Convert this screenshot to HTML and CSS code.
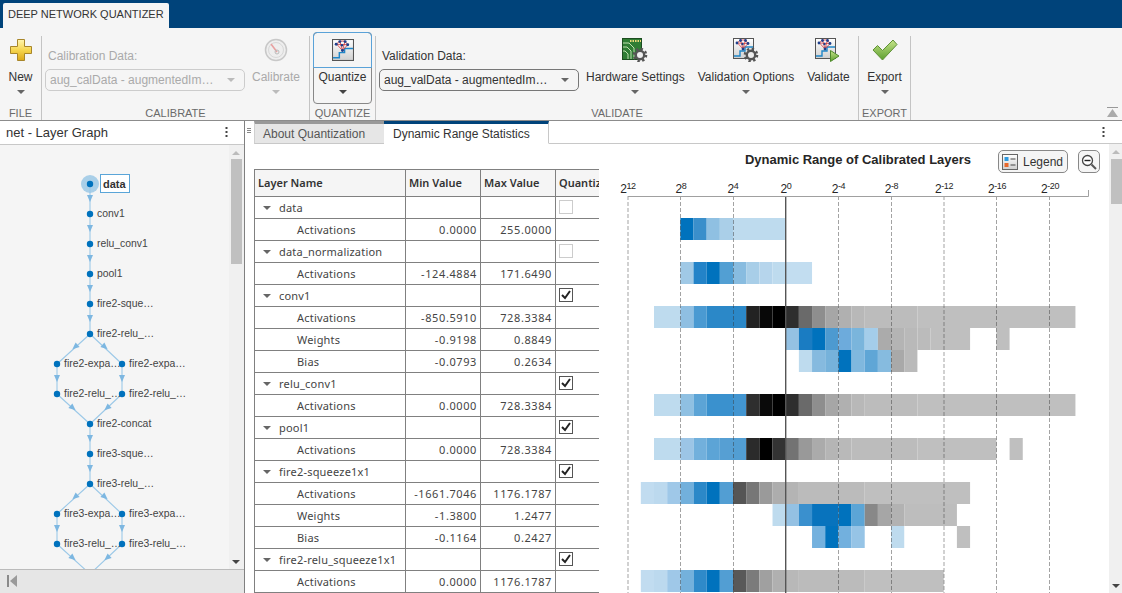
FILE: index.html
```html
<!DOCTYPE html>
<html lang="en">
<head>
<meta charset="utf-8">
<title>Deep Network Quantizer</title>
<link rel="stylesheet" href="styles.css">
</head>
<body>
<svg class="defs" width="0" height="0">
  <defs>
    <linearGradient id="gold" x1="0" y1="0" x2="0" y2="1"><stop offset="0" stop-color="#fff6b0"/><stop offset=".5" stop-color="#f6d650"/><stop offset="1" stop-color="#dca818"/></linearGradient>
    <linearGradient id="green" x1="0" y1="0" x2="0" y2="1"><stop offset="0" stop-color="#c6e48a"/><stop offset="1" stop-color="#5c9e2e"/></linearGradient>
    <linearGradient id="paper" x1="0" y1="0" x2="0" y2="1"><stop offset="0" stop-color="#fff"/><stop offset="1" stop-color="#d0d0d0"/></linearGradient>
    <g id="net">
      <rect x=".5" y=".5" width="20" height="20" fill="url(#paper)" stroke="#555"/>
      <path d="M1 18h6v-5h5V9h8" fill="none" stroke="#1f86c8" stroke-width="1.4"/>
      <path d="M4 5 7.500 2 12.500 2 15 5.500 10 11 5 5.500Z M4 5 15 5.500 M7.500 2 10 11 M12.500 2 10 11" fill="none" stroke="#d8383a" stroke-width=".8"/>
      <g fill="#1e3f8c"><circle cx="4" cy="5" r="1.400"/><circle cx="7.500" cy="2.500" r="1.400"/><circle cx="12.500" cy="2.500" r="1.400"/><circle cx="15" cy="5.500" r="1.400"/><circle cx="10" cy="11" r="1.400"/><circle cx="9.500" cy="6" r="1.200"/></g>
    </g>
    <g id="gear">
      <circle r="6" fill="none" stroke="#555" stroke-width="2.600" stroke-dasharray="2.300 2.400"/>
      <circle r="4.200" fill="#eee" stroke="#555" stroke-width="2.400"/>
    </g>
    <polygon id="arr" points="-3,-3.500 3,-3.500 0,3.500" fill="#7db7e1"/>
    <polygon id="caret" points="0,0 8,0 4,4"/>
  </defs>
</svg>

<header class="titlebar"><div class="apptab">DEEP NETWORK QUANTIZER</div></header>

<section class="ribbon">
  <div class="group g-file">
    <div class="group-body">
      <button class="tool">
        <svg class="icon" width="24" height="24" viewBox="0 0 24 24"><path d="M8.500 1.500h7v7h7v7h-7v7h-7v-7h-7v-7h7z" fill="url(#gold)" stroke="#a8862a" stroke-linejoin="round"/></svg>
        <span>New</span><i class="drop"></i>
      </button>
    </div>
    <div class="group-label">FILE</div>
  </div>
  <div class="sep"></div>
  <div class="group g-cal">
    <div class="group-body">
      <div class="field off">
        <label>Calibration Data:</label>
        <div class="combo"><span>aug_calData - augmentedIm…</span><i class="drop"></i></div>
      </div>
      <button class="tool off">
        <svg class="icon" width="24" height="24" viewBox="0 0 24 24"><circle cx="12" cy="12" r="10.500" fill="#eee" stroke="#c8c8c8" stroke-width="1.500"/><circle cx="12" cy="12" r="7.500" fill="none" stroke="#d8d8d8"/><path d="M7 6l6 8" stroke="#e8a0a0" stroke-width="1.600"/><circle cx="13" cy="14" r="2" fill="none" stroke="#bbb"/></svg>
        <span>Calibrate</span><i class="drop"></i>
      </button>
    </div>
    <div class="group-label">CALIBRATE</div>
  </div>
  <div class="sep"></div>
  <div class="group g-quant">
    <div class="group-body">
      <button class="quantize">
        <span class="q-top"><svg width="22" height="22" viewBox="0 0 21 21"><use href="#net"/></svg></span>
        <span class="q-bottom"><span>Quantize</span><i class="drop dark"></i></span>
      </button>
    </div>
    <div class="group-label">QUANTIZE</div>
  </div>
  <div class="sep"></div>
  <div class="group g-val">
    <div class="group-body">
      <div class="field">
        <label>Validation Data:</label>
        <div class="combo"><span>aug_valData - augmentedIm…</span><i class="drop"></i></div>
      </div>
      <button class="tool">
        <svg class="icon" width="26" height="24" viewBox="0 0 26 24"><rect x=".5" y=".5" width="19" height="21" fill="#2f7d34" stroke="#1d4d20"/><path d="M1 5h6l5 5v11M1 9h4l4 4v8M1 13h2l3 3v5" fill="none" stroke="#bfe0b0"/><path d="M8 3h11" stroke="#e8d878" stroke-width="2" stroke-dasharray="1.500 1"/><use href="#gear" x="18" y="17"/></svg>
        <span>Hardware Settings</span><i class="drop"></i>
      </button>
      <button class="tool">
        <svg class="icon" width="26" height="24" viewBox="0 0 26 24"><use href="#net"/><use href="#gear" x="18" y="17"/></svg>
        <span>Validation Options</span><i class="drop"></i>
      </button>
      <button class="tool">
        <svg class="icon" width="26" height="24" viewBox="0 0 26 24"><use href="#net"/><path d="M15.500 12.500 24 18l-8.500 5.500z" fill="url(#green)" stroke="#4d8a2a"/></svg>
        <span>Validate</span>
      </button>
    </div>
    <div class="group-label">VALIDATE</div>
  </div>
  <div class="sep"></div>
  <div class="group g-exp">
    <div class="group-body">
      <button class="tool">
        <svg class="icon" width="26" height="24" viewBox="0 0 26 24"><path d="M1 12l4.500-4.500 5 5L21 2l4 4.500L10.500 22z" fill="url(#green)" stroke="#5f9136" stroke-linejoin="round"/></svg>
        <span>Export</span><i class="drop"></i>
      </button>
    </div>
    <div class="group-label">EXPORT</div>
  </div>
  <div class="sep"></div>
  <div class="ribbon-fill">
    <svg width="11" height="10" viewBox="0 0 11 10"><path d="M0 .5h11" stroke="#999"/><path d="M5.500 2 11 10H0z" fill="#aaa"/></svg>
  </div>
</section>

<main class="workspace">
  <aside class="left">
    <div class="panel-head">
      <h2>net - Layer Graph</h2>
      <svg class="kebab" width="3" height="11" viewBox="0 0 3 11"><g fill="#444"><rect x=".5" width="2" height="2"/><rect x=".5" y="4" width="2" height="2"/><rect x=".5" y="8" width="2" height="2"/></g></svg>
    </div>
    <div class="graph-area">
      <svg class="graph" width="229" height="424" viewBox="0 145 229 424">
        <circle cx="90" cy="184" r="9" fill="#a9cfe8"/>
        <g class="edges">
          <path d="M90 184V334M90 334 57 364M90 334l32 30M57 364v30M122 364v30M57 394l33 30M122 394l-32 30M90 424v60M90 484 57 514M90 484l32 30M57 514v30M122 514v30M57 544l33 30M122 544l-32 30"/>
        </g>
        <use href="#arr" x="90" y="198.500"/><use href="#arr" x="90" y="228.500"/><use href="#arr" x="90" y="258.500"/><use href="#arr" x="90" y="288.500"/><use href="#arr" x="90" y="318.500"/>
        <use href="#arr" transform="translate(75 347) rotate(48)"/><use href="#arr" transform="translate(105 347) rotate(-48)"/>
        <use href="#arr" x="57" y="378.500"/><use href="#arr" x="122" y="378.500"/>
        <use href="#arr" transform="translate(73 408) rotate(-48)"/><use href="#arr" transform="translate(107 408) rotate(48)"/>
        <use href="#arr" x="90" y="438.500"/><use href="#arr" x="90" y="468.500"/>
        <use href="#arr" transform="translate(75 497) rotate(48)"/><use href="#arr" transform="translate(105 497) rotate(-48)"/>
        <use href="#arr" x="57" y="528.500"/><use href="#arr" x="122" y="528.500"/>
        <use href="#arr" transform="translate(73 558) rotate(-48)"/><use href="#arr" transform="translate(107 558) rotate(48)"/>
        <g fill="#0072bd">
          <circle cx="90" cy="184" r="3.200"/><circle cx="90" cy="214" r="3.200"/><circle cx="90" cy="244" r="3.200"/><circle cx="90" cy="274" r="3.200"/><circle cx="90" cy="304" r="3.200"/><circle cx="90" cy="334" r="3.200"/>
          <circle cx="57" cy="364" r="3.200"/><circle cx="122" cy="364" r="3.200"/><circle cx="57" cy="394" r="3.200"/><circle cx="122" cy="394" r="3.200"/>
          <circle cx="90" cy="424" r="3.200"/><circle cx="90" cy="454" r="3.200"/><circle cx="90" cy="484" r="3.200"/>
          <circle cx="57" cy="514" r="3.200"/><circle cx="122" cy="514" r="3.200"/><circle cx="57" cy="544" r="3.200"/><circle cx="122" cy="544" r="3.200"/>
        </g>
        <rect x="100.500" y="174.500" width="29" height="18" fill="#fff" stroke="#5aa5d8"/>
        <text class="node sel" x="103" y="188">data</text>
        <g class="nodes">
          <text class="node" x="97" y="216.500">conv1</text>
          <text class="node" x="97" y="246.500">relu_conv1</text>
          <text class="node" x="97" y="276.500">pool1</text>
          <text class="node" x="97" y="306.500">fire2-sque…</text>
          <text class="node" x="97" y="336.500">fire2-relu_…</text>
          <text class="node" x="64" y="366.500">fire2-expa…</text>
          <text class="node" x="129" y="366.500">fire2-expa…</text>
          <text class="node" x="64" y="396.500">fire2-relu_…</text>
          <text class="node" x="129" y="396.500">fire2-relu_…</text>
          <text class="node" x="97" y="426.500">fire2-concat</text>
          <text class="node" x="97" y="456.500">fire3-sque…</text>
          <text class="node" x="97" y="486.500">fire3-relu_…</text>
          <text class="node" x="64" y="516.500">fire3-expa…</text>
          <text class="node" x="129" y="516.500">fire3-expa…</text>
          <text class="node" x="64" y="546.500">fire3-relu_…</text>
          <text class="node" x="129" y="546.500">fire3-relu_…</text>
        </g>
      </svg>
      <div class="vscroll vscroll-left">
        <i class="up"></i>
        <div class="thumb thumb-left"></div>
        <i class="down"></i>
      </div>
    </div>
    <div class="panel-foot">
      <svg width="10" height="12" viewBox="0 0 10 12"><rect width="2" height="12" fill="#8a8a8a"/><path d="M10 0v12L3 6z" fill="#9a9a9a"/></svg>
    </div>
  </aside>

  <section class="right">
    <div class="tabstrip">
      <div class="grip"><b></b><b></b><b></b></div>
      <div class="tab">About Quantization</div>
      <div class="tab active">Dynamic Range Statistics</div>
      <div class="strip-fill">
        <svg class="kebab" width="3" height="11" viewBox="0 0 3 11"><g fill="#444"><rect x=".5" width="2" height="2"/><rect x=".5" y="4" width="2" height="2"/><rect x=".5" y="8" width="2" height="2"/></g></svg>
      </div>
    </div>
    <div class="content">
      <div class="table-wrap">
        <table class="stats">
          <colgroup><col class="c-name"><col class="c-num"><col class="c-num"><col class="c-q"></colgroup>
          <thead><tr><th>Layer Name</th><th>Min Value</th><th>Max Value</th><th>Quantize</th></tr></thead>
          <tbody>
            <tr><td class="layer"><svg class="tw" width="8" height="4"><use href="#caret"/></svg>data</td><td></td><td></td><td class="q"><span class="cb off"></span></td></tr>
            <tr><td class="sub">Activations</td><td class="n">0.0000</td><td class="n">255.0000</td><td></td></tr>
            <tr><td class="layer"><svg class="tw" width="8" height="4"><use href="#caret"/></svg>data_normalization</td><td></td><td></td><td class="q"><span class="cb off"></span></td></tr>
            <tr><td class="sub">Activations</td><td class="n">-124.4884</td><td class="n">171.6490</td><td></td></tr>
            <tr><td class="layer"><svg class="tw" width="8" height="4"><use href="#caret"/></svg>conv1</td><td></td><td></td><td class="q"><span class="cb on"><svg width="12" height="12" viewBox="0 0 12 12"><path d="M2 6l3 3 5-7" fill="none" stroke="#222" stroke-width="2"/></svg></span></td></tr>
            <tr><td class="sub">Activations</td><td class="n">-850.5910</td><td class="n">728.3384</td><td></td></tr>
            <tr><td class="sub">Weights</td><td class="n">-0.9198</td><td class="n">0.8849</td><td></td></tr>
            <tr><td class="sub">Bias</td><td class="n">-0.0793</td><td class="n">0.2634</td><td></td></tr>
            <tr><td class="layer"><svg class="tw" width="8" height="4"><use href="#caret"/></svg>relu_conv1</td><td></td><td></td><td class="q"><span class="cb on"><svg width="12" height="12" viewBox="0 0 12 12"><path d="M2 6l3 3 5-7" fill="none" stroke="#222" stroke-width="2"/></svg></span></td></tr>
            <tr><td class="sub">Activations</td><td class="n">0.0000</td><td class="n">728.3384</td><td></td></tr>
            <tr><td class="layer"><svg class="tw" width="8" height="4"><use href="#caret"/></svg>pool1</td><td></td><td></td><td class="q"><span class="cb on"><svg width="12" height="12" viewBox="0 0 12 12"><path d="M2 6l3 3 5-7" fill="none" stroke="#222" stroke-width="2"/></svg></span></td></tr>
            <tr><td class="sub">Activations</td><td class="n">0.0000</td><td class="n">728.3384</td><td></td></tr>
            <tr><td class="layer"><svg class="tw" width="8" height="4"><use href="#caret"/></svg>fire2-squeeze1x1</td><td></td><td></td><td class="q"><span class="cb on"><svg width="12" height="12" viewBox="0 0 12 12"><path d="M2 6l3 3 5-7" fill="none" stroke="#222" stroke-width="2"/></svg></span></td></tr>
            <tr><td class="sub">Activations</td><td class="n">-1661.7046</td><td class="n">1176.1787</td><td></td></tr>
            <tr><td class="sub">Weights</td><td class="n">-1.3800</td><td class="n">1.2477</td><td></td></tr>
            <tr><td class="sub">Bias</td><td class="n">-0.1164</td><td class="n">0.2427</td><td></td></tr>
            <tr><td class="layer"><svg class="tw" width="8" height="4"><use href="#caret"/></svg>fire2-relu_squeeze1x1</td><td></td><td></td><td class="q"><span class="cb on"><svg width="12" height="12" viewBox="0 0 12 12"><path d="M2 6l3 3 5-7" fill="none" stroke="#222" stroke-width="2"/></svg></span></td></tr>
            <tr><td class="sub">Activations</td><td class="n">0.0000</td><td class="n">1176.1787</td><td></td></tr>
          </tbody>
        </table>
      </div>
      <div class="chart">
        <svg class="plot" width="510" height="449" viewBox="599 144 510 449">
          <text class="title" x="858" y="164">Dynamic Range of Calibrated Layers</text>
          <g class="heat" transform="translate(785.7 218) scale(13.17 22)">
            <rect x="-8" width="1" fill="#0072bd"/><rect x="-7" width="1" fill="#3a8fcb"/><rect x="-6" width="1" fill="#8fc0e2"/><rect x="-5" width="1" fill="#aacfe8"/><rect x="-4" width="4" fill="#bedbee"/>
          </g>
          <g class="heat" transform="translate(785.7 262) scale(13.17 22)">
            <rect x="-8" width="1" fill="#a0c9e6"/><rect x="-7" width="1" fill="#2383c8"/><rect x="-6" width="1" fill="#0072bd"/><rect x="-5" width="1" fill="#529fd3"/><rect x="-4" width="1" fill="#88bce0"/><rect x="-3" width="1" fill="#a8cee8"/><rect x="-2" width="1" fill="#b6d5ec"/><rect x="-1" width="1" fill="#bedbee"/><rect x="0" width="2" fill="#c2ddf0"/>
          </g>
          <g class="heat" transform="translate(785.7 306) scale(13.17 22)">
            <rect x="-10" width="2" fill="#bedbee"/><rect x="-8" width="1" fill="#8fbfe2"/><rect x="-7" width="1" fill="#4a9ad2"/><rect x="-6" width="3" fill="#2b88c8"/><rect x="-3" width="1" fill="#222"/><rect x="-2" width="1" fill="#080808"/><rect x="-1" width="1" fill="#000"/><rect x="0" width="1" fill="#2e2e2e"/><rect x="1" width="1" fill="#6a6a6a"/><rect x="2" width="1" fill="#8e8e8e"/><rect x="3" width="1" fill="#a6a6a6"/><rect x="4" width="1" fill="#b0b0b0"/><rect x="5" width="1" fill="#b8b8b8"/><rect x="6" width="4" fill="#bcbcbc"/><rect x="10" width="12" fill="#bfbfbf"/>
          </g>
          <g class="heat" transform="translate(785.7 328) scale(13.17 22)">
            <rect x="0" width="1" fill="#94c1e3"/><rect x="1" width="1" fill="#1a7cc2"/><rect x="2" width="1" fill="#0072bd"/><rect x="3" width="1" fill="#4d9ad0"/><rect x="4" width="1" fill="#6dabdc"/><rect x="5" width="1" fill="#7ab5dc"/><rect x="6" width="1" fill="#a4cdea"/><rect x="7" width="1" fill="#ababab"/><rect x="8" width="1" fill="#b4b4b4"/><rect x="9" width="1" fill="#b9b9b9"/><rect x="10" width="1" fill="#bbb"/><rect x="11" width="3" fill="#bfbfbf"/><rect x="16" width="1" fill="#bfbfbf"/>
          </g>
          <g class="heat" transform="translate(785.7 350) scale(13.17 22)">
            <rect x="1" width="1" fill="#bedbee"/><rect x="2" width="1" fill="#86badf"/><rect x="3" width="1" fill="#76b2db"/><rect x="4" width="1" fill="#0072bd"/><rect x="5" width="1" fill="#80b8de"/><rect x="6" width="1" fill="#5fa6d6"/><rect x="7" width="1" fill="#86bbdf"/><rect x="8" width="1" fill="#a9a9a9"/><rect x="9" width="1" fill="#bababa"/>
          </g>
          <g class="heat" transform="translate(785.7 394) scale(13.17 22)">
            <rect x="-10" width="2" fill="#bedbee"/><rect x="-8" width="1" fill="#8fc0e2"/><rect x="-7" width="1" fill="#5ca4d6"/><rect x="-6" width="2" fill="#3a91ce"/><rect x="-4" width="1" fill="#4295d0"/><rect x="-3" width="1" fill="#2e2e2e"/><rect x="-2" width="1" fill="#0a0a0a"/><rect x="-1" width="1" fill="#000"/><rect x="0" width="1" fill="#2e2e2e"/><rect x="1" width="1" fill="#6a6a6a"/><rect x="2" width="1" fill="#8e8e8e"/><rect x="3" width="1" fill="#a6a6a6"/><rect x="4" width="1" fill="#b0b0b0"/><rect x="5" width="1" fill="#b8b8b8"/><rect x="6" width="4" fill="#bcbcbc"/><rect x="10" width="12" fill="#bfbfbf"/>
          </g>
          <g class="heat" transform="translate(785.7 438) scale(13.17 22)">
            <rect x="-10" width="2" fill="#bedbee"/><rect x="-8" width="1" fill="#9cc5e6"/><rect x="-7" width="1" fill="#72b0dc"/><rect x="-6" width="1" fill="#5ca4d6"/><rect x="-5" width="1" fill="#569fd3"/><rect x="-4" width="1" fill="#529ed3"/><rect x="-3" width="1" fill="#2b2b2b"/><rect x="-2" width="1" fill="#000"/><rect x="-1" width="1" fill="#333"/><rect x="0" width="1" fill="#737373"/><rect x="1" width="1" fill="#999"/><rect x="2" width="1" fill="#ababab"/><rect x="3" width="1" fill="#b5b5b5"/><rect x="4" width="1" fill="#b9b9b9"/><rect x="5" width="5" fill="#bcbcbc"/><rect x="10" width="6" fill="#bfbfbf"/><rect x="17" width="1" fill="#bfbfbf"/>
          </g>
          <g class="heat" transform="translate(785.7 482) scale(13.17 22)">
            <rect x="-11" width="1" fill="#c1dcf0"/><rect x="-10" width="1" fill="#bcd9ee"/><rect x="-9" width="1" fill="#9fc8e8"/><rect x="-8" width="1" fill="#72b0dc"/><rect x="-7" width="1" fill="#2b88c8"/><rect x="-6" width="1" fill="#0072bd"/><rect x="-5" width="1" fill="#529ed3"/><rect x="-4" width="1" fill="#555"/><rect x="-3" width="1" fill="#777"/><rect x="-2" width="1" fill="#9a9a9a"/><rect x="-1" width="1" fill="#adadad"/><rect x="0" width="1" fill="#b4b4b4"/><rect x="1" width="5" fill="#bbb"/><rect x="6" width="8" fill="#bfbfbf"/>
          </g>
          <g class="heat" transform="translate(785.7 504) scale(13.17 22)">
            <rect x="-1" width="1" fill="#bedbee"/><rect x="0" width="1" fill="#94c1e3"/><rect x="1" width="1" fill="#3a90ce"/><rect x="2" width="2" fill="#0873bd"/><rect x="4" width="1" fill="#0072bd"/><rect x="5" width="1" fill="#5ca5d6"/><rect x="6" width="1" fill="#888"/><rect x="7" width="1" fill="#a6a6a6"/><rect x="8" width="1" fill="#b2b2b2"/><rect x="9" width="4" fill="#bdbdbd"/>
          </g>
          <g class="heat" transform="translate(785.7 526) scale(13.17 22)">
            <rect x="2" width="1" fill="#74b1de"/><rect x="3" width="1" fill="#0072bd"/><rect x="4" width="1" fill="#72b0de"/><rect x="5" width="1" fill="#96c4e6"/><rect x="8" width="1" fill="#bedbee"/><rect x="13" width="1" fill="#bfbfbf"/>
          </g>
          <g class="heat" transform="translate(785.7 570) scale(13.17 22)">
            <rect x="-11" width="1" fill="#c1dcf0"/><rect x="-10" width="1" fill="#bcd9ee"/><rect x="-9" width="1" fill="#9fc8e8"/><rect x="-8" width="1" fill="#74b1dc"/><rect x="-7" width="1" fill="#2f8ac9"/><rect x="-6" width="1" fill="#0072bd"/><rect x="-5" width="1" fill="#529ed3"/><rect x="-4" width="1" fill="#585858"/><rect x="-3" width="1" fill="#7b7b7b"/><rect x="-2" width="1" fill="#a0a0a0"/><rect x="-1" width="1" fill="#b0b0b0"/><rect x="0" width="1" fill="#b8b8b8"/><rect x="1" width="5" fill="#bbb"/><rect x="6" width="6" fill="#bfbfbf"/>
          </g>
          <g class="grid">
            <path d="M628 196V593M680.500 196V593M733.500 196V593M838.500 196V593M891.500 196V593M944 196V593M996.500 196V593M1049.500 196V593"/>
          </g>
          <path class="zero" d="M785.700 196V593"/>
          <path class="axis" d="M628 196.500H1088.500V190"/>
          <g class="ticks">
            <text x="628" y="193">2<tspan dy="-4" class="ex">12</tspan></text>
            <text x="681" y="193">2<tspan dy="-4" class="ex">8</tspan></text>
            <text x="733" y="193">2<tspan dy="-4" class="ex">4</tspan></text>
            <text x="786" y="193">2<tspan dy="-4" class="ex">0</tspan></text>
            <text x="838.500" y="193">2<tspan dy="-4" class="ex">-4</tspan></text>
            <text x="891.500" y="193">2<tspan dy="-4" class="ex">-8</tspan></text>
            <text x="944" y="193">2<tspan dy="-4" class="ex">-12</tspan></text>
            <text x="997" y="193">2<tspan dy="-4" class="ex">-16</tspan></text>
            <text x="1050" y="193">2<tspan dy="-4" class="ex">-20</tspan></text>
          </g>
        </svg>
        <div class="chart-tools">
          <button class="legend">
            <svg width="16" height="16" viewBox="0 0 16 16"><rect x=".5" y=".5" width="15" height="15" fill="url(#paper)" stroke="#666"/><rect x="2.500" y="3" width="4" height="4" fill="#2e9ae0"/><rect x="2.500" y="9" width="4" height="4" fill="#e8682c"/><path d="M8.500 5h5M8.500 11h5" stroke="#444"/></svg>
            <span>Legend</span>
          </button>
          <button class="zoomout">
            <svg width="16" height="16" viewBox="0 0 16 16"><circle cx="6.500" cy="6.500" r="5" fill="#fff" stroke="#444" stroke-width="1.300"/><path d="M3.500 6.500h6" stroke="#222" stroke-width="1.400"/><path d="M10.500 10.500 15 15" stroke="#555" stroke-width="2"/></svg>
          </button>
        </div>
      </div>
      <div class="vscroll vscroll-right">
        <i class="up"></i>
        <div class="thumb thumb-right"></div>
        <i class="down"></i>
      </div>
    </div>
  </section>
</main>
</body>
</html>
```

FILE: styles.css
```css
* { box-sizing: border-box; }
html, body { margin: 0; padding: 0; width: 1122px; height: 593px; overflow: hidden; }
body { display: flex; flex-direction: column; background: #fff; font-family: "Liberation Sans", Arial, sans-serif; font-size: 12px; color: #333; }
.defs { position: absolute; }
button { font: inherit; color: inherit; background: none; border: 0; padding: 0; margin: 0; }
h2 { margin: 0; font: inherit; }

.titlebar { height: 28px; flex: none; background: #00437a; padding: 3px 0 0 3px; }
.apptab { width: 166px; height: 25px; background: #f5f5f5; border-radius: 2px 2px 0 0; font-size: 11px; line-height: 22px; padding-left: 5px; white-space: nowrap; color: #333; }

.ribbon { height: 93px; flex: none; display: flex; background: #f5f5f5; padding-top: 4px; border-bottom: 1px solid #8c8c8c; }
.sep { width: 1px; margin-top: 4px; background: #c4c4c4; flex: none; }
.group { display: flex; flex-direction: column; flex: none; }
.group-body { height: 74px; display: flex; }
.group-label { height: 14px; line-height: 14px; text-align: center; font-size: 11px; color: #6a6a6a; }
.g-file { width: 41px; }
.g-file .tool { width: 41px; }
.g-cal { width: 267px; }
.g-cal .group-body { padding-left: 3px; gap: 7px; }
.g-quant { width: 65px; }
.g-quant .group-body { padding-left: 3px; }
.g-val { width: 482px; }
.g-val .group-body { padding-left: 3px; gap: 13px; }
.g-val .field { margin-right: -6px; }
.g-exp { width: 51px; }
.g-exp .tool { width: 51px; }
.ribbon-fill { flex: 1; display: flex; align-items: flex-end; justify-content: flex-end; padding: 0 4px 3px 0; }

.tool { display: flex; flex-direction: column; align-items: center; padding-top: 6px; white-space: nowrap; color: #333; }
.tool .icon { display: block; height: 24px; }
.tool span { margin-top: 8px; line-height: 14px; }
.tool.off span { color: #aaa; }
.drop { display: block; width: 0; height: 0; border: 4px solid transparent; border-top-color: #666; border-bottom: 0; }
.drop.dark { border-top-color: #444; }
.tool .drop { margin-top: 6px; }
.tool.off .drop { border-top-color: #bbb; }

.field { width: 200px; display: flex; flex-direction: column; }
.field label { height: 37px; padding: 17px 0 0 3px; line-height: 14px; white-space: nowrap; }
.combo { height: 22px; border: 1px solid #777; border-radius: 5px; display: flex; align-items: center; justify-content: space-between; padding: 0 9px 0 4px; white-space: nowrap; background: #f5f5f5; }
.field.off label, .field.off .combo { color: #aaa; }
.field.off .combo { border-color: #ccc; }
.field.off .drop { border-top-color: #bbb; }

.quantize { width: 59px; height: 72px; display: flex; flex-direction: column; border: 1px solid #888; border-radius: 4px; }
.q-top { height: 36px; flex: none; display: flex; justify-content: center; padding-top: 6px; margin: -1px -1px 0; border: 1px solid #5aa2d8; border-radius: 4px 4px 0 0; }
.q-bottom { display: flex; flex-direction: column; align-items: center; padding-top: 2px; }
.q-bottom span { line-height: 14px; }
.q-bottom .drop { margin-top: 6px; }

.workspace { flex: 1; display: flex; min-height: 0; }
.left { width: 245px; flex: none; display: flex; flex-direction: column; border-right: 1px solid #808080; }
.panel-head { height: 24px; flex: none; display: flex; align-items: center; justify-content: space-between; padding: 0 16px 0 6px; font-size: 13px; border-bottom: 1px solid #c8c8c8; background: #fff; color: #333; }
.kebab { display: block; }
.graph-area { flex: 1; min-height: 0; display: flex; background: #f5f5f5; }
.graph { display: block; flex: none; }
.edges path { fill: none; stroke: #9cc9e8; stroke-width: 1.100; }
.node { font-size: 10.4px; fill: #444; }
.node.sel { font-size: 11px; font-weight: bold; fill: #333; }
.panel-foot { height: 24px; flex: none; background: #e6e6e6; border-top: 1px solid #bbb; padding: 5px 0 0 7px; }

.vscroll { display: flex; flex-direction: column; align-items: flex-end; flex: none; background: #f0f0f0; position: relative; }
.vscroll-left { width: 15px; padding: 0 2px 0 2px; }
.vscroll-right { width: 13px; }
.up, .down { position: absolute; width: 0; height: 0; border: 4px solid transparent; border-bottom: 0; }
.up { border-top: 0; border-bottom: 4px solid #bbb; top: 6px; }
.down { border-top-color: #444; bottom: 5px; }
.vscroll-left .up, .vscroll-left .down { left: 3px; }
.vscroll-right .up, .vscroll-right .down { left: 3px; }
.thumb { background: #c0c0c0; }
.thumb-left { width: 11px; height: 105px; margin-top: 14px; }
.thumb-right { width: 11px; height: 45px; margin-top: 15px; }

.right { flex: 1; min-width: 0; display: flex; flex-direction: column; }
.tabstrip { height: 23px; flex: none; display: flex; background: #fff; }
.grip { width: 9px; flex: none; display: flex; flex-direction: column; gap: 1px; padding: 7px 0 0 2px; }
.grip b { display: block; width: 4px; height: 1px; background: #888; }
.tab { height: 23px; padding-left: 8px; white-space: nowrap; background: #e6e6e6; color: #555; width: 130px; border-top: 3px solid #999; border-bottom: 1px solid #c8c8c8; border-left: 1px solid #d0d0d0; line-height: 20px; }
.tab.active { width: 165px; padding-left: 9px; background: #fff; color: #333; border-top-color: #00437a; border-bottom-color: #fff; border-left: 0; border-right: 1px solid #c8c8c8; }
.strip-fill { flex: 1; display: flex; justify-content: flex-end; padding: 6px 17px 0 0; border-bottom: 1px solid #c8c8c8; }

.content { flex: 1; min-height: 0; display: flex; }
.table-wrap { width: 354px; flex: none; height: 449px; overflow: hidden; padding: 25px 0 0 9px; }
.stats { border-collapse: collapse; table-layout: fixed; width: 345px; font-family: "Noto Sans", "Open Sans", sans-serif; font-size: 11px; letter-spacing: .2px; color: #444; }
.c-name { width: 151px; }
.c-num { width: 75px; }
.c-q { width: 44px; }
.stats th, .stats td { border: 1px solid #808080; height: 22px; padding: 0 0 1px; overflow: hidden; white-space: nowrap; }
.stats th { height: 27px; background: #f5f5f5; text-align: left; padding-left: 3px; font-weight: 600; color: #333; letter-spacing: 0; }
.stats td.layer { padding-left: 8px; }
.stats td.sub { padding-left: 42px; }
.stats td.n { text-align: right; padding-right: 3px; letter-spacing: .6px; }
.tw { margin-right: 8px; vertical-align: 2px; fill: #666; }
.q { padding-left: 3px !important; }
.cb { display: block; width: 14px; height: 14px; border: 1px solid #ccc; background: #fff; }
.cb.on { border-color: #555; }
.cb svg { display: block; margin: 0; }

.chart { width: 510px; flex: none; position: relative; }
.plot { display: block; }
.title { font-size: 13px; font-weight: bold; text-anchor: middle; fill: #262626; }
.heat rect { height: 1px; }
.grid path { fill: none; stroke: rgba(50, 50, 50, .45); stroke-dasharray: 4 2; }
.zero { fill: none; stroke: #555; stroke-width: 1.400; }
.axis { fill: none; stroke: #a0a0a0; }
.ticks text { font-size: 12px; text-anchor: middle; fill: #262626; letter-spacing: -.5px; }
.ex { font-size: 9px; letter-spacing: -.4px; }
.chart-tools { position: absolute; top: 6px; left: 399px; display: flex; gap: 10px; }
.legend { width: 70px; height: 23px; display: flex; align-items: center; gap: 5px; padding-left: 3px; border: 1px solid #888; border-radius: 5px; background: #f5f5f5; color: #333; }
.zoomout { width: 22px; height: 23px; display: flex; align-items: center; justify-content: center; border: 1px solid #888; border-radius: 5px; background: #f5f5f5; }
```
